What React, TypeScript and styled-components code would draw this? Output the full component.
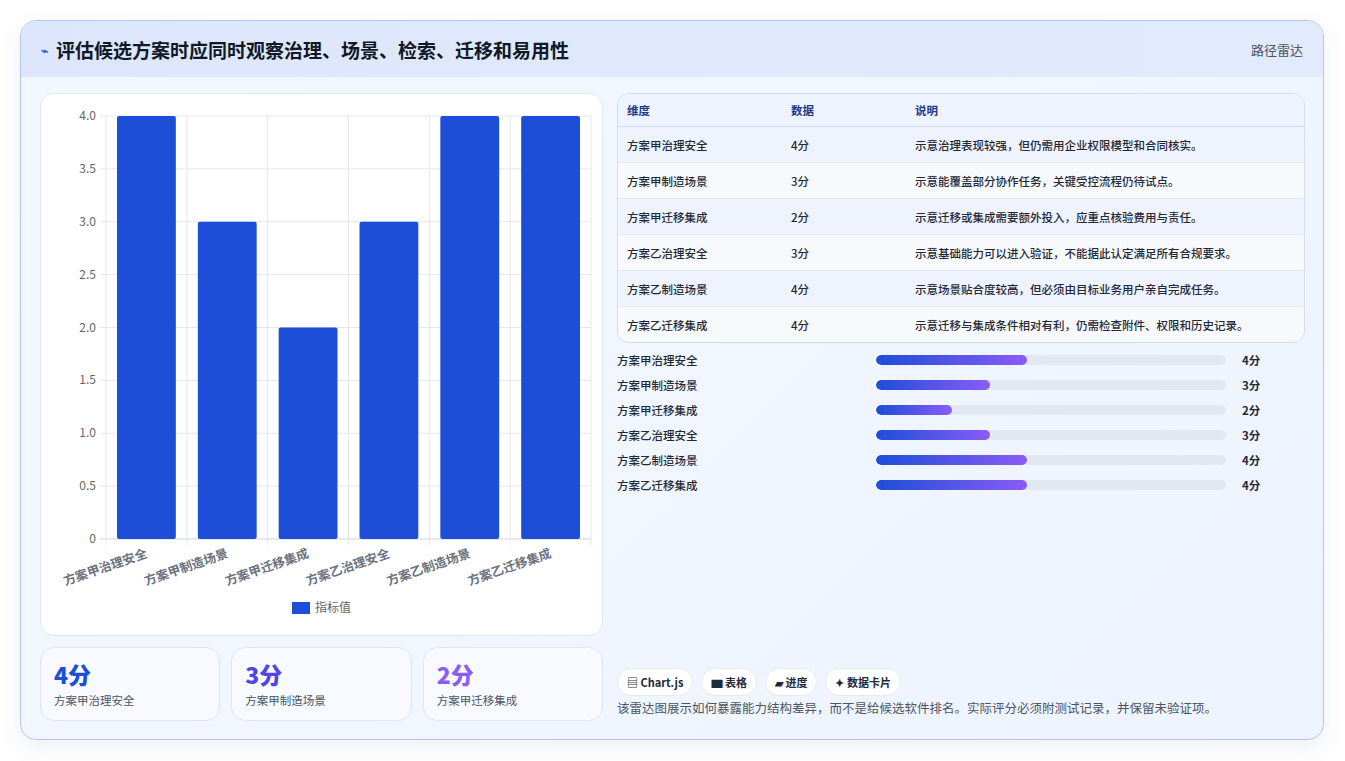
import React from "react";
import styled, { createGlobalStyle } from "styled-components";

const Global = createGlobalStyle`
  body { margin: 0; background: #fff; font-family: "Noto Sans CJK SC", "Noto Sans", sans-serif; }
`;

const Page = styled.div`
  width: 1345px; height: 761px; box-sizing: border-box; padding: 20px 21px 21px 20px;
`;
const Card = styled.div`
  height: 720px; box-sizing: border-box; border: 1px solid #b6c6ec; border-radius: 16px; overflow: hidden;
  background: linear-gradient(135deg, #f3f7ff 0%, #eef4ff 100%);
  box-shadow: 0 8px 24px rgba(30, 60, 140, 0.08);
  display: flex; flex-direction: column;
`;
const Header = styled.div`
  height: 56px; flex: none; display: flex; align-items: center; justify-content: space-between;
  padding: 0 20px; background: linear-gradient(90deg, #dde6fc, #e2ebfd);
`;
const Title = styled.h1`
  margin: 0; font-size: 19px; font-weight: 700; color: #111827; display: flex; align-items: center; gap: 8px;
`;
const Tag = styled.span` font-size: 13px; color: #4b5563; `;
const Body = styled.div`
  flex: 1; display: grid; grid-template-columns: 563px 1fr; gap: 14px; padding: 16px 18px 18px 19px;
`;
const Col = styled.div` display: flex; flex-direction: column; gap: 11px; min-height: 0; `;
const Panel = styled.div`
  height: 543px; background: #fff; border: 1px solid #dfe7f7; border-radius: 14px; box-sizing: border-box;
`;
const Kpis = styled.div` display: grid; grid-template-columns: repeat(3, 1fr); gap: 11px; `;
const Kpi = styled.div`
  height: 74px; box-sizing: border-box; border: 1px solid #dde6f7; border-radius: 14px; background: #f8faff;
  padding: 12px 13px;
`;
const KpiVal = styled.div<{ $c: string }>` font-size: 23px; font-weight: 800; color: ${p => p.$c}; line-height: 28px; `;
const KpiLab = styled.div` font-size: 11.5px; color: #4b5563; margin-top: 4px; `;
const Table = styled.table`
  width: 100%; border-collapse: separate; border-spacing: 0; border: 1px solid #d3ddf0; border-radius: 12px; overflow: hidden;
  font-size: 11.5px; color: #1f2937;
  th { text-align: left; font-weight: 600; color: #1e3a8a; height: 32px; background: #eef4ff; border-bottom: 1px solid #d3ddf0; padding: 0 9px; }
  td { height: 35px; padding: 0 9px; font-weight: 500; }
  tr:nth-child(odd) td { background: #eef3fe; }
  tr:nth-child(even) td { background: #f7f9fd; }
  tr td { border-bottom: 1px solid #e4eaf5; }
  tr:last-child td { border-bottom: none; }
`;
const Bars = styled.div` display: flex; flex-direction: column; gap: 7px; margin-top: 8px; `;
const BarRow = styled.div`
  display: grid; grid-template-columns: 259px 358px 1fr; align-items: center; height: 18px;
  font-size: 11.5px; color: #1f2937; font-weight: 500;
`;
const Track = styled.div` height: 10px; border-radius: 5px; background: #e2e8f2; overflow: hidden; margin-right: 8px; `;
const Fill = styled.div` height: 100%; border-radius: 5px; background: linear-gradient(90deg, #1d4ed8, #8b5cf6); `;
const Val = styled.span` padding-left: 8px; font-weight: 700; `;
const Spacer = styled.div` flex: 1; `;
const Chips = styled.div` display: flex; gap: 8px; `;
const Chip = styled.span`
  height: 28px; padding: 0 9px; box-sizing: border-box; border-radius: 14px; background: #fff; border: 1px solid #e5eaf3;
  font-size: 11px; font-weight: 700; color: #1f2937; display: inline-flex; align-items: center; gap: 4px;
`;
const Note = styled.p` margin: 2px 0 4px; font-size: 12.5px; color: #4b5563; `;

const cats = ["方案甲治理安全", "方案甲制造场景", "方案甲迁移集成", "方案乙治理安全", "方案乙制造场景", "方案乙迁移集成"];
const vals = [4, 3, 2, 3, 4, 4];
const notes = [
  "示意治理表现较强，但仍需用企业权限模型和合同核实。",
  "示意能覆盖部分协作任务，关键受控流程仍待试点。",
  "示意迁移或集成需要额外投入，应重点核验费用与责任。",
  "示意基础能力可以进入验证，不能据此认定满足所有合规要求。",
  "示意场景贴合度较高，但必须由目标业务用户亲自完成任务。",
  "示意迁移与集成条件相对有利，仍需检查附件、权限和历史记录。",
];

function Chart() {
  const L = 65, R = 550, T = 22, B = 445;
  const cw = (R - L) / 6;
  const y = (v: number) => B - (v / 4) * (B - T);
  const ticks = [0, 0.5, 1, 1.5, 2, 2.5, 3, 3.5, 4];
  return (
    <svg width="561" height="541" style={{ display: "block" }} fontFamily="'Noto Sans CJK SC', sans-serif">
      {ticks.map(t => (
        <g key={t}>
          <line x1={L - 6} x2={R} y1={y(t)} y2={y(t)} stroke={t === 0 ? "#cbd5e1" : "#e5e7eb"} />
          <text x={L - 10} y={y(t) + 4} fontSize="12" fill="#666" textAnchor="end">{t === 0 ? "0" : t.toFixed(1)}</text>
        </g>
      ))}
      {Array.from({ length: 7 }).map((_, i) => (
        <line key={i} x1={L + i * cw} x2={L + i * cw} y1={T} y2={B + 6} stroke="#e5e7eb" />
      ))}
      {vals.map((v, i) => (
        <rect key={i} x={L + i * cw + 11} y={y(v)} width={cw - 22} height={B - y(v)} fill="#1d4ed8" rx="2" />
      ))}
      {cats.map((c, i) => (
        <text key={c} transform={`translate(${L + i * cw + 42},${B + 18}) rotate(-19)`} textAnchor="end"
          fontSize="12.5" fontWeight="600" fill="#6b7280">{c}</text>
      ))}
      <rect x="251" y="508" width="18" height="12" fill="#1d4ed8" />
      <text x="274" y="518" fontSize="12" fill="#666">指标值</text>
    </svg>
  );
}

export default function App() {
  return (
    <Page>
      <Global />
      <Card>
        <Header>
          <Title><span style={{ color: "#2563eb", fontSize: 12 }}>⌁</span>评估候选方案时应同时观察治理、场景、检索、迁移和易用性</Title>
          <Tag>路径雷达</Tag>
        </Header>
        <Body>
          <Col>
            <Panel><Chart /></Panel>
            <Kpis>
              <Kpi><KpiVal $c="#1d4ed8">4分</KpiVal><KpiLab>方案甲治理安全</KpiLab></Kpi>
              <Kpi><KpiVal $c="#4f46e5">3分</KpiVal><KpiLab>方案甲制造场景</KpiLab></Kpi>
              <Kpi><KpiVal $c="#8b5cf6">2分</KpiVal><KpiLab>方案甲迁移集成</KpiLab></Kpi>
            </Kpis>
          </Col>
          <Col style={{ gap: 0 }}>
            <Table>
              <thead><tr><th style={{ width: 146 }}>维度</th><th style={{ width: 106 }}>数据</th><th>说明</th></tr></thead>
              <tbody>
                {cats.map((c, i) => (
                  <tr key={c}><td>{c}</td><td>{vals[i]}分</td><td>{notes[i]}</td></tr>
                ))}
              </tbody>
            </Table>
            <Bars>
              {cats.map((c, i) => (
                <BarRow key={c}>
                  <span>{c}</span>
                  <Track><Fill style={{ width: `${(vals[i] / 9.25) * 100}%` }} /></Track>
                  <Val>{vals[i]}分</Val>
                </BarRow>
              ))}
            </Bars>
            <Spacer />
            <Chips>
              <Chip>▤ Chart.js</Chip>
              <Chip>▆ 表格</Chip>
              <Chip>▰ 进度</Chip>
              <Chip>✦ 数据卡片</Chip>
            </Chips>
            <Note>该雷达图展示如何暴露能力结构差异，而不是给候选软件排名。实际评分必须附测试记录，并保留未验证项。</Note>
          </Col>
        </Body>
      </Card>
    </Page>
  );
}
